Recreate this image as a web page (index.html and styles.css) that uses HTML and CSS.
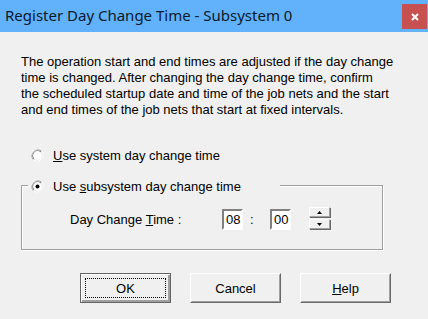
FILE: index.html
```html
<!DOCTYPE html>
<html>
<head>
<meta charset="utf-8">
<link rel="stylesheet" href="styles.css">
</head>
<body>
<div class="window">
  <div class="titlebar">
    <span class="title">Register Day Change Time - Subsystem 0</span>
    <div class="close">
      <svg width="8" height="8" viewBox="0 0 8 8"><path d="M1 1 L7 7 M7 1 L1 7" stroke="#fff" stroke-width="2"/></svg>
    </div>
  </div>
  <div class="content">
    <p class="desc">The operation start and end times are adjusted if the day change<br>time is changed. After changing the day change time, confirm<br>the scheduled startup date and time of the job nets and the start<br>and end times of the job nets that start at fixed intervals.</p>
    <div class="radio-row first">
      <svg class="radio" width="13" height="13" viewBox="0 0 13 13">
        <path d="M2.3 10.7 A6 6 0 0 1 10.7 2.3" fill="none" stroke="#a0a0a0"/>
        <path d="M10.7 2.3 A6 6 0 0 1 2.3 10.7" fill="none" stroke="#ffffff"/>
        <path d="M3.0 10.0 A5 5 0 0 1 10.0 3.0" fill="none" stroke="#696969"/>
        <path d="M10.0 3.0 A5 5 0 0 1 3.0 10.0" fill="none" stroke="#e3e3e3"/>
        <circle cx="6.5" cy="6.5" r="4.4" fill="#fff"/>
      </svg>
      <span class="label"><u>U</u>se system day change time</span>
    </div>
    <div class="group">
      <div class="legend radio-row">
        <svg class="radio" width="13" height="13" viewBox="0 0 13 13">
          <path d="M2.3 10.7 A6 6 0 0 1 10.7 2.3" fill="none" stroke="#a0a0a0"/>
          <path d="M10.7 2.3 A6 6 0 0 1 2.3 10.7" fill="none" stroke="#ffffff"/>
          <path d="M3.0 10.0 A5 5 0 0 1 10.0 3.0" fill="none" stroke="#696969"/>
          <path d="M10.0 3.0 A5 5 0 0 1 3.0 10.0" fill="none" stroke="#e3e3e3"/>
          <circle cx="6.5" cy="6.5" r="4.4" fill="#fff"/>
          <circle cx="6.5" cy="6.5" r="2" fill="#000"/>
        </svg>
        <span class="label">Use <u>s</u>ubsystem day change time</span>
      </div>
      <div class="time-row">
        <span class="time-label">Day Change <u>T</u>ime :</span>
        <span class="field">08</span>
        <span class="colon">:</span>
        <span class="field">00</span>
        <div class="spin">
          <div class="spin-btn"><svg width="5" height="3" viewBox="0 0 5 3"><path d="M2.5 0 L5 3 L0 3 Z" fill="#000"/></svg></div>
          <div class="spin-btn"><svg width="5" height="3" viewBox="0 0 5 3"><path d="M0 0 L5 0 L2.5 3 Z" fill="#000"/></svg></div>
        </div>
      </div>
    </div>
    <div class="buttons">
      <div class="btn default"><div class="focus">OK</div></div>
      <div class="btn"><div class="inner">Cancel</div></div>
      <div class="btn"><div class="inner"><u>H</u>elp</div></div>
    </div>
  </div>
</div>
</body>
</html>
```

FILE: styles.css
```css
html, body {
  margin: 0;
  padding: 0;
}
body {
  width: 428px;
  height: 319px;
  overflow: hidden;
  background: #f0f0f0;
}
.window {
  width: 428px;
  height: 319px;
  background: #f0f0f0;
  font-family: "Liberation Sans", Arial, sans-serif;
  font-size: 13px;
  color: #000;
}
.titlebar {
  height: 32px;
  background: #62b1fb;
  display: flex;
  align-items: center;
  padding-left: 5px;
}
.title {
  font-family: "Noto Sans", "Open Sans", sans-serif;
  font-size: 15px;
  color: #0b1a2a;
  flex: 1;
  margin-top: -2px;
}
.close {
  width: 25px;
  height: 25px;
  margin-right: 1px;
  margin-top: 1px;
  background: #c75050;
  display: flex;
  align-items: center;
  justify-content: center;
}
.content {
  padding: 22px 0 0 21px;
}
.desc {
  margin: 0;
  width: 400px;
  line-height: 16px;
  white-space: nowrap;
}
.radio-row {
  display: flex;
  align-items: center;
  height: 16px;
}
.radio-row.first {
  margin-top: 29px;
  padding-left: 10px;
}
.radio {
  display: block;
  flex: none;
}
.label {
  margin-left: 9px;
}
.group {
  position: relative;
  margin-top: 22px;
  width: 360px;
  height: 63px;
  border: 1px solid #a0a0a0;
  box-shadow: inset 1px 1px 0 #fff, 1px 1px 0 #fff;
}
.legend {
  position: absolute;
  left: 6px;
  top: -9px;
  background: #f0f0f0;
  padding: 0 39px 0 3px;
  height: 18px;
}
.time-row {
  display: flex;
  align-items: center;
  margin-top: 21px;
  padding-left: 48px;
}
.time-label {
  width: 152px;
}
.field {
  width: 15px;
  height: 17px;
  background: #fff;
  border-style: solid;
  border-width: 2px;
  border-color: #808080 #ffffff #ffffff #808080;
  line-height: 17px;
  padding-left: 2px;
  box-sizing: content-box;
}
.colon {
  margin-left: 7px;
  margin-right: 16px;
  width: 4px;
}
.spin {
  margin-left: 18px;
  display: flex;
  flex-direction: column;
  width: 21px;
}
.spin-btn {
  height: 8px;
  display: flex;
  align-items: center;
  justify-content: center;
  border-style: solid;
  border-width: 1px;
  border-color: #ffffff #a0a0a0 #a0a0a0 #ffffff;
  box-shadow: 1px 1px 0 #696969;
  margin-bottom: 2px;
}
.buttons {
  display: flex;
  margin-top: 23px;
  padding-left: 59px;
  gap: 19px;
}
.btn {
  width: 91px;
  height: 30px;
  box-sizing: border-box;
  border-style: solid;
  border-width: 1px;
  border-color: #ffffff #696969 #696969 #ffffff;
  display: flex;
}
.btn .inner {
  flex: 1;
  display: flex;
  align-items: center;
  justify-content: center;
  border-style: solid;
  border-width: 1px;
  border-color: #f0f0f0 #a0a0a0 #a0a0a0 #f0f0f0;
}
.btn.default {
  border: 1px solid #646464;
  box-shadow: inset 1px 1px 0 #fff, inset -2px -2px 0 #a0a0a0;
  padding: 4px;
}
.btn .focus {
  flex: 1;
  display: flex;
  align-items: center;
  justify-content: center;
  border: 1px dotted #000;
}
```
